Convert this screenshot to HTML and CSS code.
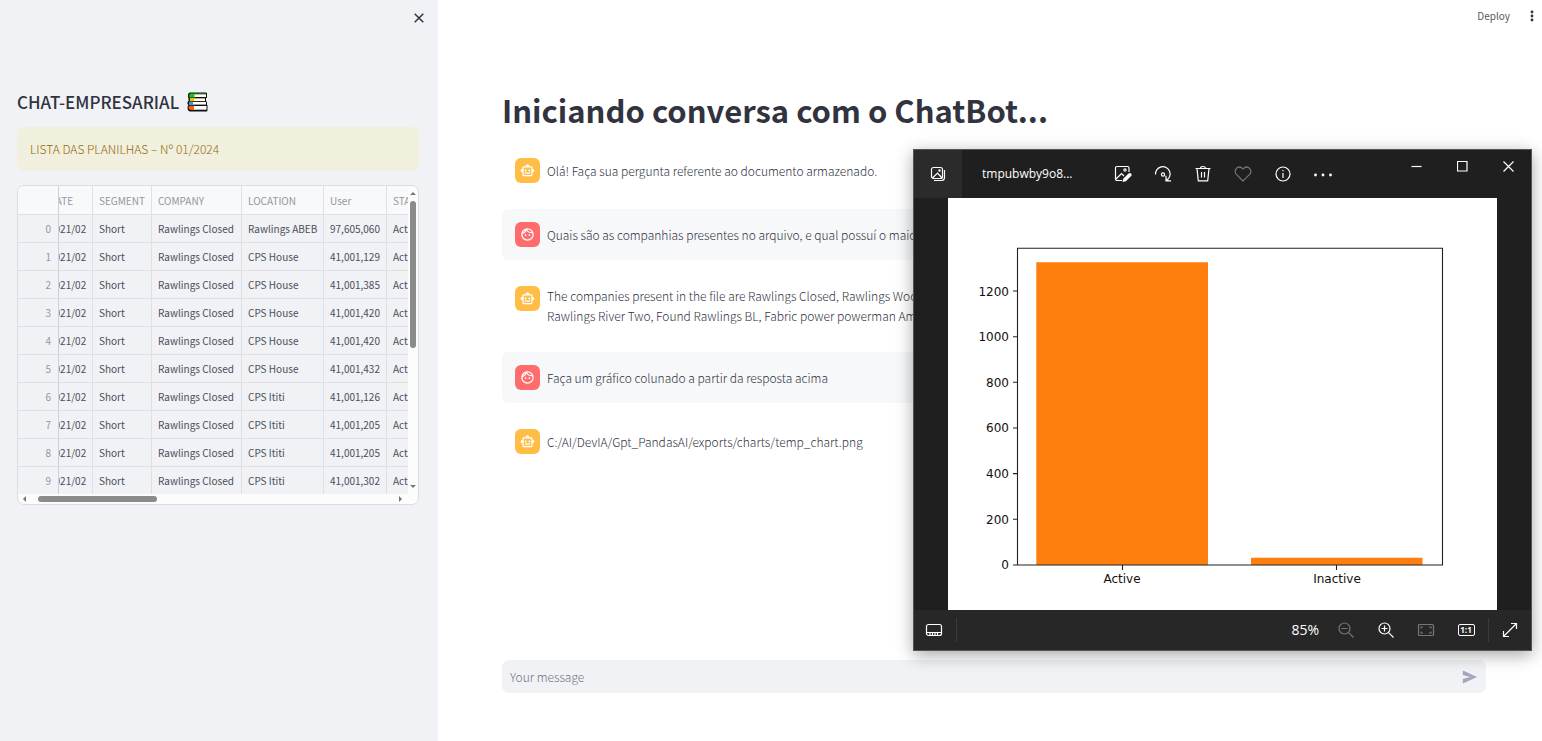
FILE: index.html
```html
<!DOCTYPE html>
<html lang="pt-BR">
<head>
<meta charset="utf-8">
<title>ChatBot</title>
<link rel="stylesheet" href="styles.css">
</head>
<body>
<svg class="defs" aria-hidden="true">
  <symbol id="bot" viewBox="0 0 24 24"><path fill="#fff" fill-rule="evenodd" d="M20 9V7c0-1.100-.9-2-2-2h-3c0-1.660-1.340-3-3-3S9 3.340 9 5H6c-1.100 0-2 .9-2 2v2c-1.660 0-3 1.340-3 3s1.340 3 3 3v4c0 1.100.9 2 2 2h12c1.100 0 2-.9 2-2v-4c1.660 0 3-1.340 3-3s-1.340-3-3-3zm-2 10H6V7h12v12zM9 10.500a1.500 1.500 0 1 0 0 3 1.500 1.500 0 0 0 0-3zm6 0a1.500 1.500 0 1 0 0 3 1.500 1.500 0 0 0 0-3zM8 15h8v2H8z"/></symbol>
  <symbol id="face" viewBox="0 0 24 24"><circle cx="12" cy="12" r="9" fill="none" stroke="#fff" stroke-width="2"/><path fill="none" stroke="#fff" stroke-width="2" d="M3.500 10.500C7 9.500 9 7.500 10 4c2 3.500 5.500 5.500 10.500 5"/><circle cx="9" cy="13" r="1.300" fill="#fff"/><circle cx="15" cy="13" r="1.300" fill="#fff"/></symbol>
</svg>
<div class="app">
  <aside class="sidebar">
    <button class="close-sidebar" aria-label="Fechar"><svg width="10" height="10" viewBox="0 0 10 10"><path d="M.7.7l8.600 8.600M9.300.7L.7 9.300" stroke="#31333f" stroke-width="1.500"/></svg></button>
    <h2 class="brand">CHAT-EMPRESARIAL
      <svg width="21" height="20" viewBox="0 0 21 20" aria-hidden="true"><path d="M3 .5h16q1 0 1 1v4q0 .5-1 .5v3.500h.5q.5 0 .5.500v3h.5v5q0 1.500-1 1.500H3Q.5 19 .5 16q0-2 1-3Q0 12.500.5 10.500t1.500-2Q1 7.500 1.500 6.500L1 5V2.500Q1.500.5 3 .5z" fill="#111"/><path d="M3.500 1.500H8v4H2.300v-2q0-2 1.200-2z" fill="#16c60c"/><path d="M8 1.500h11V2H8z" fill="#16c60c"/><path d="M7.500 2.300H19V5H7.500z" fill="#fff"/><path d="M3 6h4.500v3H3z" fill="#ffb900"/><path d="M7 6h11v.7H7z" fill="#ffb900"/><path d="M7 6.700h11v2.400H7z" fill="#fff"/><path d="M2 9.500h4.500v3.500H2z" fill="#3a96dd"/><path d="M6 10h13v2.600H6z" fill="#fff"/><path d="M3 13.700h4.500V18H4q-2.500-.5-2.500-2.500 0-1 1.500-1.800z" fill="#f7630c"/><path d="M7 14h12.500v3.700H7z" fill="#fff"/></svg>
    </h2>
    <div class="notice">LISTA DAS PLANILHAS – Nº 01/2024</div>
    <div class="grid">
      <div class="grid-view">
        <table>
          <colgroup><col class="c-index"><col class="c-date"><col class="c-segment"><col class="c-company"><col class="c-location"><col class="c-user"><col></colgroup>
          <thead><tr><th></th><th class="date">DATE</th><th>SEGMENT</th><th>COMPANY</th><th>LOCATION</th><th>User</th><th>STA</th></tr></thead>
          <tbody>
            <tr><td>0</td><td class="date">2021/02</td><td>Short</td><td>Rawlings Closed</td><td>Rawlings ABEB</td><td>97,605,060</td><td>Act</td></tr>
            <tr><td>1</td><td class="date">2021/02</td><td>Short</td><td>Rawlings Closed</td><td>CPS House</td><td>41,001,129</td><td>Act</td></tr>
            <tr><td>2</td><td class="date">2021/02</td><td>Short</td><td>Rawlings Closed</td><td>CPS House</td><td>41,001,385</td><td>Act</td></tr>
            <tr><td>3</td><td class="date">2021/02</td><td>Short</td><td>Rawlings Closed</td><td>CPS House</td><td>41,001,420</td><td>Act</td></tr>
            <tr><td>4</td><td class="date">2021/02</td><td>Short</td><td>Rawlings Closed</td><td>CPS House</td><td>41,001,420</td><td>Act</td></tr>
            <tr><td>5</td><td class="date">2021/02</td><td>Short</td><td>Rawlings Closed</td><td>CPS House</td><td>41,001,432</td><td>Act</td></tr>
            <tr><td>6</td><td class="date">2021/02</td><td>Short</td><td>Rawlings Closed</td><td>CPS Ititi</td><td>41,001,126</td><td>Act</td></tr>
            <tr><td>7</td><td class="date">2021/02</td><td>Short</td><td>Rawlings Closed</td><td>CPS Ititi</td><td>41,001,205</td><td>Act</td></tr>
            <tr><td>8</td><td class="date">2021/02</td><td>Short</td><td>Rawlings Closed</td><td>CPS Ititi</td><td>41,001,205</td><td>Act</td></tr>
            <tr><td>9</td><td class="date">2021/02</td><td>Short</td><td>Rawlings Closed</td><td>CPS Ititi</td><td>41,001,302</td><td>Act</td></tr>
          </tbody>
        </table>
      </div>
      <div class="vbar"><svg width="6" height="3" viewBox="0 0 6 3"><path d="M3 0l3 3H0z" fill="#777"/></svg><i class="thumb"></i><svg class="end" width="6" height="3" viewBox="0 0 6 3"><path d="M0 0h6L3 3z" fill="#777"/></svg></div>
      <div class="hbar"><svg width="3" height="6" viewBox="0 0 3 6"><path d="M3 0v6L0 3z" fill="#777"/></svg><i class="thumb"></i><svg class="end" width="3" height="6" viewBox="0 0 3 6"><path d="M0 0l3 3-3 3z" fill="#777"/></svg></div>
    </div>
  </aside>

  <main class="main">
    <header class="topbar">
      <button class="deploy">Deploy</button>
      <button class="menu" aria-label="Menu"><svg width="4" height="12" viewBox="0 0 4 12"><g fill="#31333f"><circle cx="2" cy="2" r="1.400"/><circle cx="2" cy="6" r="1.400"/><circle cx="2" cy="10" r="1.400"/></g></svg></button>
    </header>
    <h1>Iniciando conversa com o ChatBot...</h1>
    <div class="chat">
      <div class="msg"><span class="avatar bot"><svg><use href="#bot"/></svg></span><p>Olá! Faça sua pergunta referente ao documento armazenado.</p></div>
      <div class="msg user"><span class="avatar"><svg><use href="#face"/></svg></span><p>Quais são as companhias presentes no arquivo, e qual possuí o maior</p></div>
      <div class="msg"><span class="avatar bot"><svg><use href="#bot"/></svg></span><p>The companies present in the file are Rawlings Closed, Rawlings Woo<br>Rawlings River Two, Found Rawlings BL, Fabric power powerman Ame</p></div>
      <div class="msg user"><span class="avatar"><svg><use href="#face"/></svg></span><p>Faça um gráfico colunado a partir da resposta acima</p></div>
      <div class="msg"><span class="avatar bot"><svg><use href="#bot"/></svg></span><p>C:/AI/DevIA/Gpt_PandasAI/exports/charts/temp_chart.png</p></div>
    </div>
    <form class="composer">
      <input type="text" placeholder="Your message" aria-label="Your message">
      <button type="button" aria-label="Enviar"><svg width="16" height="14" viewBox="0 0 16 14"><path d="M1.500.8L15 7 1.500 13.200Q.8 13.400.8 12.600V9L8 7 .8 5V1.400Q.8.600 1.500.8z" fill="#a3a8b8"/></svg></button>
    </form>
  </main>
</div>

<section class="viewer" aria-label="Fotos">
  <header class="viewer-top">
    <button class="tab" aria-label="Galeria"><svg width="16" height="16" viewBox="0 0 16 16"><g class="ln"><rect x="1.500" y="1.500" width="11" height="11" rx="2"/><path d="M2.500 12l5-5 4.500 5M4 14.500h7.500a3 3 0 0 0 3-3V4"/><circle cx="9.500" cy="4.500" r=".6"/></g></svg></button>
    <span class="filename">tmpubwby9o8...</span>
    <div class="tools">
      <button aria-label="Editar"><svg width="18" height="18" viewBox="0 0 18 18"><g class="ln"><path d="M8 15.500H3A1.500 1.500 0 0 1 1.500 14V3A1.500 1.500 0 0 1 3 1.500h10.500A1.500 1.500 0 0 1 15 3v4M2 14l5.500-5.500L10 11"/><circle cx="11" cy="5" r="1.100"/></g><path d="M8.500 17l.7-3.300 5.300-5.200q1.500-1 2.600 0t0 2.600l-5.200 5.200z" fill="#fff"/></svg></button>
      <button aria-label="Girar"><svg width="18" height="18" viewBox="0 0 18 18"><g class="ln"><path d="M1.500 9.500A7.300 7.300 0 1 1 12.500 15.300M12 10.800v5h5"/><circle cx="9" cy="9.500" r="1.600"/></g></svg></button>
      <button aria-label="Excluir"><svg width="18" height="18" viewBox="0 0 18 18"><path class="ln" d="M1.500 3.500h15M3 3.500l1.300 12.300h9.400L15 3.500M6.500 3.500q0-2 2.500-2t2.500 2M7.500 7v5.500M10.500 7v5.500"/></svg></button>
      <button aria-label="Favorito"><svg width="18" height="18" viewBox="0 0 18 18"><path class="ln dim" d="M9 16L2.400 9.400a4.200 4.200 0 0 1 0-6q3-2.800 6 0L9 4l.6-.6q3-2.800 6 0a4.200 4.200 0 0 1 0 6z"/></svg></button>
      <button aria-label="Informações"><svg width="18" height="18" viewBox="0 0 18 18"><circle class="ln" cx="9" cy="9" r="7"/><path class="ln" d="M9 8v5M9 5v1.200"/></svg></button>
      <button aria-label="Mais"><svg width="20" height="18" viewBox="0 0 20 18"><g fill="#fff"><circle cx="2.500" cy="10" r="1.400"/><circle cx="10" cy="10" r="1.400"/><circle cx="17.500" cy="10" r="1.400"/></g></svg></button>
    </div>
    <div class="controls">
      <button aria-label="Minimizar"><svg width="11" height="11" viewBox="0 0 11 11"><path class="ln" d="M.5 5.500h10"/></svg></button>
      <button aria-label="Maximizar"><svg width="11" height="11" viewBox="0 0 11 11"><path class="ln" d="M.5.5h9.500v9.500H.5z"/></svg></button>
      <button aria-label="Fechar"><svg width="11" height="11" viewBox="0 0 11 11"><path class="ln" d="M.5.5l10 10M10.500.5l-10 10"/></svg></button>
    </div>
  </header>
  <div class="canvas">
    <svg class="chart" viewBox="0 0 549 412" role="img" aria-label="Active, Inactive">
      <rect width="549" height="412" fill="#fff"/>
      <path fill="#ff7f0e" d="M88.300 64.300H260V367H88.300zM303 359.700h171.500V367H303z"/>
      <path class="axis" d="M69.500 50.300H494.500V367H69.500zM65 367h4.500M65 321.300h4.500M65 275.600h4.500M65 230h4.500M65 184.300h4.500M65 138.700h4.500M65 93h4.500M174.500 367v5M388.500 367v5"/>
      <g class="ylab"><text x="61" y="371">0</text><text x="61" y="326">200</text><text x="61" y="280">400</text><text x="61" y="234">600</text><text x="61" y="189">800</text><text x="61" y="143">1000</text><text x="61" y="98">1200</text></g>
      <g class="xlab"><text x="174" y="385">Active</text><text x="389" y="385">Inactive</text></g>
    </svg>
  </div>
  <footer class="viewer-bottom">
    <button class="film" aria-label="Tira de filme"><svg width="18" height="14" viewBox="0 0 18 14"><rect class="ln" x="1.500" y="1.500" width="15" height="11" rx="2"/><path class="ln" d="M2 9.500h14M5 10v3M7.500 10v3M10 10v3M12.500 10v3"/></svg></button>
    <div class="zoombar">
      <span class="pct">85%</span>
      <button aria-label="Diminuir"><svg width="18" height="18" viewBox="0 0 18 18"><path class="ln dim" d="M11.600 11.600l4.900 4.900M4.500 7.500h6"/><circle class="ln dim" cx="7.500" cy="7.500" r="5.500"/></svg></button>
      <button aria-label="Aumentar"><svg width="18" height="18" viewBox="0 0 18 18"><path class="ln" d="M11.600 11.600l4.900 4.900M4.500 7.500h6M7.500 4.500v6"/><circle class="ln" cx="7.500" cy="7.500" r="5.500"/></svg></button>
      <button aria-label="Ajustar"><svg width="18" height="14" viewBox="0 0 18 14"><g class="ln dim"><rect x="1.500" y="1.500" width="15" height="11" rx="1"/><path d="M4 5.500v-1.500h2M12 4h2v1.500M4 8.500V10h2M12 10h2V8.500"/></g></svg></button>
      <button class="actual" aria-label="Tamanho real"><span>1:1</span></button>
    </div>
    <button class="full" aria-label="Tela cheia"><svg width="16" height="16" viewBox="0 0 16 16"><path class="ln" d="M1.500 14.500l13-13M9 1.500h5.500V7M1.500 9v5.500H7"/></svg></button>
  </footer>
</section>
</body>
</html>
```
FILE: styles.css
```css
* { box-sizing: border-box; }

body {
  margin: 0;
  background: #fff;
  color: #31333f;
  font-family: "Noto Sans CJK SC", "Noto Sans", sans-serif;
  font-size: 12px;
  font-weight: 300;
  line-height: 20px;
}

button {
  display: flex;
  align-items: center;
  justify-content: center;
  padding: 0;
  border: 0;
  background: none;
  color: inherit;
  font: inherit;
}

svg { display: block; flex: none; }
.defs { position: absolute; width: 0; height: 0; }

.app { display: flex; min-height: 100vh; }

/* Sidebar */
.sidebar {
  flex: 0 0 438px;
  padding: 8px 19px 0 17px;
  background: #f0f2f6;
}
.close-sidebar { width: 20px; height: 20px; margin: 0 -10px 0 auto; }
.brand {
  display: flex;
  align-items: center;
  gap: 8px;
  margin: 60px 0 11px;
  font-size: 17px;
  font-weight: 500;
  line-height: 28px;
}
.notice {
  padding: 12px 13px;
  border-radius: 7px;
  background: #f1f0df;
  color: #926c05;
}

/* Data grid */
.grid {
  display: grid;
  grid-template-columns: 1fr 10px;
  grid-template-rows: auto 10px;
  margin-top: 14px;
  border: 1px solid #dcdde2;
  border-radius: 7px;
  background: #fcfcfc;
  overflow: hidden;
}
.grid-view { overflow: hidden; background: #f0f2f6; }
table {
  width: 100%;
  table-layout: fixed;
  border-collapse: separate;
  border-spacing: 0;
  font-size: 10px;
  font-weight: 400;
  line-height: 20px;
}
.c-index { width: 41px; }
.c-date { width: 34px; }
.c-segment { width: 59px; }
.c-company { width: 90px; }
.c-location { width: 82px; }
.c-user { width: 63px; }
th, td {
  height: 28px;
  padding: 0 0 0 6px;
  border-right: 1px solid #dfe0e5;
  border-bottom: 1px solid #dfe0e5;
  overflow: hidden;
  text-align: left;
  white-space: nowrap;
  color: #4c4e59;
}
th { height: 29px; padding-top: 1px; background: #f8f9fb; color: #9496a0; font-weight: 400; }
td:first-child { padding: 0 7px 0 0; color: #9496a0; text-align: right; }
th:first-child, td:first-child { border-right-color: #cfd0d6; }
th:last-child, td:last-child { border-right: 0; }
tr:last-child td { height: 27px; border-bottom: 0; }
.date { padding-left: 0; text-indent: -10px; }
.vbar, .hbar { display: flex; align-items: center; }
.vbar { flex-direction: column; padding: 6px 0; gap: 6px; }
.hbar { grid-column: 1; padding: 0 6px 0 5px; gap: 12px; }
.thumb { border-radius: 3px; background: #8b8b8b; }
.vbar .thumb { width: 6px; height: 147px; }
.hbar .thumb { width: 119px; height: 6px; }
.vbar .end { margin-top: auto; }
.hbar .end { margin-left: auto; }

/* Main column */
.main {
  flex: 1;
  display: flex;
  flex-direction: column;
  min-width: 0;
  padding: 0 56px 48px 64px;
}
.topbar {
  display: flex;
  justify-content: flex-end;
  gap: 12px;
  height: 32px;
  margin-right: -56px;
}
.deploy { font-size: 10px; font-weight: 400; color: #555763; }
.menu { width: 20px; }
h1 { margin: 57px 0 14px; font-size: 31px; font-weight: 700; line-height: 42px; }
.chat { display: flex; flex-direction: column; gap: 13px; }
.msg {
  display: flex;
  align-items: flex-start;
  gap: 7px;
  padding: 13px;
  border-radius: 6px;
  white-space: nowrap;
}
.msg p { align-self: center; margin: 0; }
.user { background: #f7f8fa; }
.avatar {
  display: grid;
  place-items: center;
  width: 25px;
  height: 25px;
  border-radius: 6px;
  background: #ff6c6c;
}
.avatar.bot { background: #ffbd45; }
.avatar svg { width: 15px; height: 15px; }
.composer {
  display: flex;
  margin-top: auto;
  border-radius: 7px;
  background: #f0f2f6;
}
.composer input {
  flex: 1;
  height: 33px;
  padding: 0 8px;
  border: 0;
  background: none;
  color: inherit;
  font: inherit;
}
.composer input::placeholder { color: #70727d; opacity: 1; }
.composer button { width: 33px; }

/* Photo viewer window */
.viewer {
  position: absolute;
  top: 149px;
  right: 10px;
  width: 619px;
  border: 1px solid #555;
  background: #1f1f1f;
  color: #fff;
  font-family: "Open Sans", "Noto Sans", sans-serif;
  font-weight: 400;
  box-shadow: 0 4px 16px rgba(0, 0, 0, .35);
}
.ln { fill: none; stroke: #fff; stroke-width: 1.2; }
.dim, .dim * { stroke: #777; }
.viewer-top { display: flex; height: 48px; }
.tab { width: 48px; background: #2b2b2b; }
.filename { margin-left: 20px; line-height: 48px; width: 121px; }
.tools { display: flex; }
.tools button { width: 40px; }
.controls { display: flex; margin-left: auto; height: 32px; }
.controls button { width: 46px; }
.canvas { padding: 0 34px; }
.chart { width: 100%; }
.axis { fill: none; stroke: #222; stroke-width: 1.1; }
.ylab, .xlab { font-family: "DejaVu Sans", sans-serif; font-size: 12px; fill: #111; }
.ylab { text-anchor: end; }
.xlab { text-anchor: middle; }
.viewer-bottom { display: flex; align-items: center; height: 40px; background: #272727; }
.film { width: 43px; height: 24px; padding-right: 2px; border-right: 1px solid #3b3b3b; }
.zoombar {
  display: flex;
  align-items: center;
  height: 24px;
  margin-left: auto;
  padding-right: 2px;
  border-right: 1px solid #3b3b3b;
}
.zoombar button { width: 40px; }
.pct { margin-right: 7px; font-size: 14px; }
.actual span {
  width: 17px;
  border: 1px solid #fff;
  border-radius: 2px;
  font-size: 8px;
  font-weight: 700;
  line-height: 10px;
}
.full { width: 42px; }
```
